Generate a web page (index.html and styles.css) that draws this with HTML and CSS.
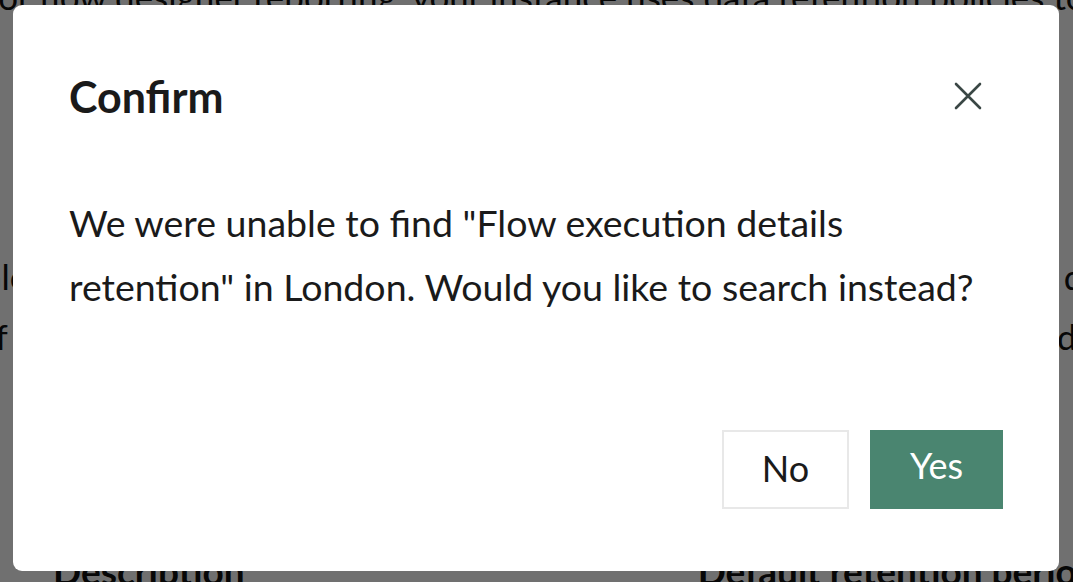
FILE: index.html
```html
<!doctype html>
<html>
<head>
	<meta charset="utf-8" />
	<title>Confirm</title>
	<link rel="stylesheet" href="styles.css">
</head>
<body>
	<main class="page">
		<p class="page-intro">For flow designer reporting, your instance uses data retention policies to control how long data is kept.</p>
		<p class="page-text">
			<span>Global retention settings are shown in the table below for each type of data and its options</span>
			<span>of flow execution data stored for this instance, grouped by its scope and its ownership group</span>
		</p>
		<div class="page-table">
			<span>Description</span>
			<span>Default retention period</span>
		</div>
	</main>

	<div class="overlay">
		<div class="dialog" role="dialog" aria-labelledby="dialog-title">
			<header class="dialog-header">
				<h1 id="dialog-title">Confirm</h1>
				<button class="dialog-close" aria-label="Close">
					<svg width="28" height="28" viewBox="0 0 28 28">
						<path d="M2 2 L26 26 M26 2 L2 26" stroke="#3a4745" stroke-width="2.6" stroke-linecap="round" fill="none"/>
					</svg>
				</button>
			</header>
			<p class="dialog-body">We were unable to find "Flow execution details retention" in London. Would you like to search instead?</p>
			<footer class="dialog-footer">
				<button class="btn btn-no">No</button>
				<button class="btn btn-yes">Yes</button>
			</footer>
		</div>
	</div>
</body>
</html>
```

FILE: styles.css
```css
*, *::before, *::after {
	box-sizing: border-box;
}

html, body {
	margin: 0;
	padding: 0;
}

body {
	width: 1073px;
	height: 582px;
	overflow: hidden;
	background: #fff;
	color: #111;
	font: normal 35px Lato, "Open Sans", sans-serif;
}

.page {
	margin-left: -60px;
	width: 1220px;
}

.page-intro {
	margin: -24px 0 0;
	line-height: 40px;
	white-space: nowrap;
	padding-left: 40px;
}

.page-text {
	margin: 230px 0 0;
	line-height: 60px;
	white-space: nowrap;
	padding-left: 36px;
}

.page-text span {
	display: block;
}

.page-table {
	display: flex;
	margin-top: 184px;
	padding-left: 113px;
	font-weight: bold;
	font-size: 37px;
	line-height: 42px;
	white-space: nowrap;
}

.page-table span:last-child {
	margin-left: 453px;
}

.overlay {
	position: fixed;
	inset: 0;
	background: rgba(0, 0, 0, 0.56);
}

.dialog {
	position: absolute;
	left: 13px;
	top: 5px;
	width: 1046px;
	height: 566px;
	background: #fff;
	border-radius: 9px;
	padding: 0 56px 62px;
	display: flex;
	flex-direction: column;
	color: #1a1a1a;
}

.dialog-header {
	display: flex;
	align-items: center;
	justify-content: space-between;
	height: 182px;
}

.dialog-header h1 {
	margin: 0;
	font-size: 43px;
	font-weight: bold;
}

.dialog-close {
	border: 0;
	background: none;
	padding: 0;
	margin-right: 21px;
	display: flex;
}

.dialog-body {
	margin: 0;
	max-width: 918px;
	line-height: 64px;
	font-size: 37.5px;
	margin-top: 4px;
}

.dialog-footer {
	margin-top: auto;
	display: flex;
	justify-content: flex-end;
	gap: 21px;
}

.btn {
	height: 79px;
	font: inherit;
	font-size: 36px;
	padding: 0;
	cursor: pointer;
}

.btn-no {
	width: 127px;
	background: #fff;
	border: 2px solid #e8e8e8;
	color: #1a1a1a;
	padding-bottom: 4px;
}

.btn-yes {
	width: 133px;
	background: #4a8570;
	border: 0;
	color: #fff;
	padding-bottom: 10px;
}
```
